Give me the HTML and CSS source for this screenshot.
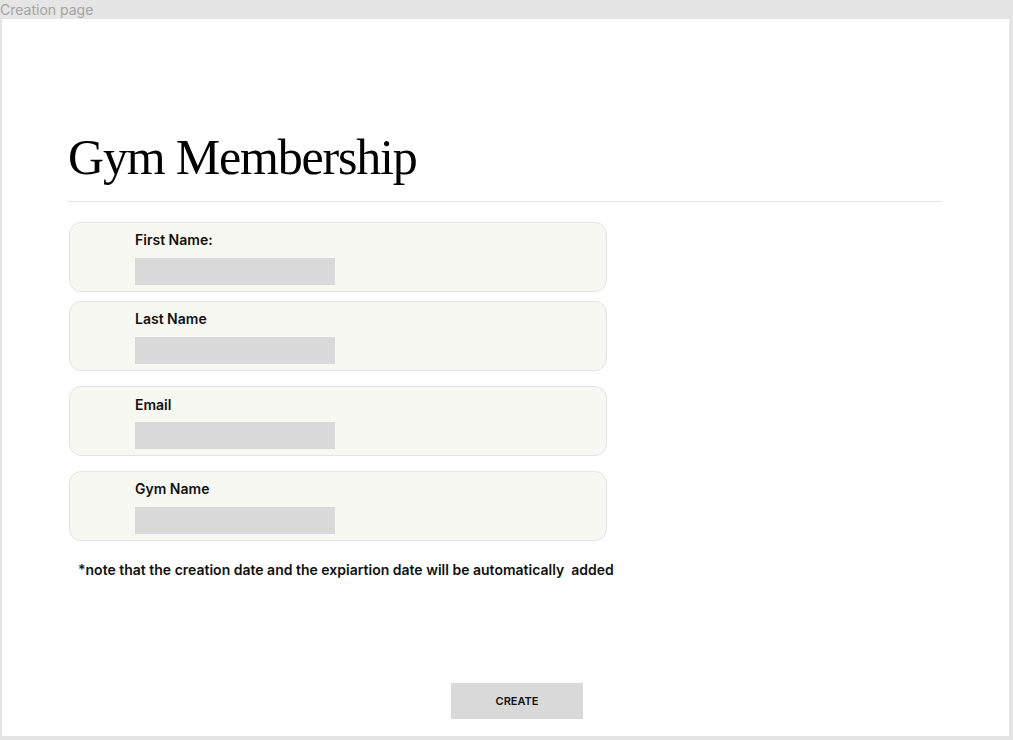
FILE: index.html
```html
<!DOCTYPE html>
<html lang="en">
<head>
<meta charset="utf-8">
<title>Creation page</title>
<link rel="stylesheet" href="styles.css">
</head>
<body>
<div class="topbar">Creation page</div>
<main class="frame">
  <h1 class="title">Gym Membership</h1>
  <div class="divider"></div>
  <div class="cards">
    <div class="card">
      <label class="label">First Name:</label>
      <div class="field"></div>
    </div>
    <div class="card card-2">
      <label class="label">Last Name</label>
      <div class="field"></div>
    </div>
    <div class="card card-spaced card-low">
      <label class="label">Email</label>
      <div class="field"></div>
    </div>
    <div class="card card-spaced">
      <label class="label">Gym Name</label>
      <div class="field"></div>
    </div>
  </div>
  <p class="note">*note that the creation date and the expiartion date will be automatically&nbsp; added</p>
  <div class="actions">
    <button class="create" type="button">CREATE</button>
  </div>
</main>
</body>
</html>
```
FILE: styles.css
```css
html, body {
  margin: 0;
  padding: 0;
}
body {
  background: #e5e5e5;
  font-family: Inter, "Noto Sans", sans-serif;
  width: 1013px;
  height: 740px;
  overflow: hidden;
}
.topbar {
  height: 19px;
  line-height: 20px;
  font-size: 14px;
  color: #a3a3a3;
}
.frame {
  display: block;
  box-sizing: border-box;
  width: 1007px;
  height: 717px;
  margin-left: 2px;
  background: #fff;
  padding: 113px 67px 0 66px;
}
.title {
  margin: 0;
  font-family: "Liberation Serif", "Times New Roman", serif;
  font-weight: 400;
  font-size: 50px;
  line-height: 50px;
  letter-spacing: -1.2px;
  color: #000;
}
.divider {
  margin-top: 19px;
  height: 1px;
  background: #e4e4e4;
}
.cards {
  margin-top: 20px;
  margin-left: 1px;
  width: 538px;
  display: flex;
  flex-direction: column;
}
.card {
  box-sizing: border-box;
  height: 70px;
  border: 1px solid #e4e4e4;
  border-radius: 12px;
  background: #f8f8f3;
  padding: 8px 0 0 65px;
  display: flex;
  flex-direction: column;
}
.card-2 {
  margin-top: 9px;
}
.card-spaced {
  margin-top: 15px;
}
.card-low {
  padding-top: 9px;
}
.card-low .field {
  margin-top: 9px;
}
.label {
  font-size: 14px;
  line-height: 17px;
  font-weight: 600;
  color: #111;
}
.field {
  margin-top: 10px;
  width: 200px;
  height: 27px;
  background: #d9d9d9;
}
.note {
  margin: 20px 0 0 10px;
  font-size: 14px;
  line-height: 17px;
  font-weight: 600;
  color: #111;
}
.actions {
  margin-top: 105px;
  padding-left: 383px;
  display: flex;
}
.create {
  width: 132px;
  height: 36px;
  border: 0;
  padding: 0;
  background: #d9d9d9;
  font-family: Inter, "Noto Sans", sans-serif;
  font-size: 11px;
  font-weight: 600;
  color: #111;
  cursor: pointer;
}
```
